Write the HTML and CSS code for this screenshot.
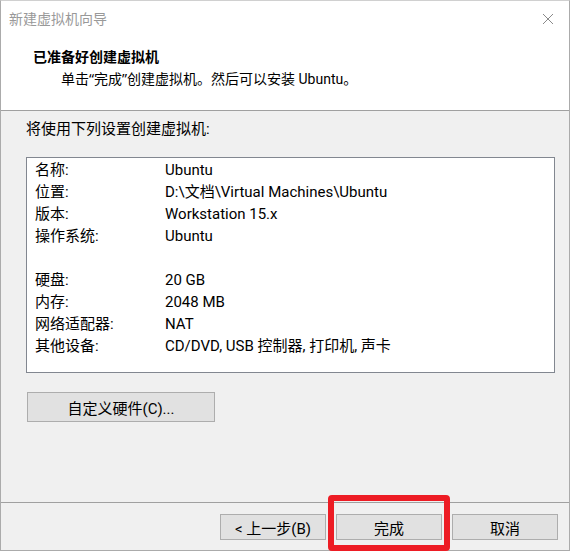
FILE: index.html
```html
<!DOCTYPE html>
<html lang="zh-CN">
<head>
    <meta charset="UTF-8">
    <title>新建虚拟机向导</title>
    <link rel="stylesheet" href="styles.css">
</head>
<body>
    <div class="window">
        <div class="header">
            <div class="titlebar">
                <span class="title">新建虚拟机向导</span>
                <svg class="close" width="12" height="12" viewBox="0 0 12 12">
                    <path d="M1 1 L11 11 M11 1 L1 11" stroke="#8a8a8a" stroke-width="1" fill="none"/>
                </svg>
            </div>
            <div class="heading">已准备好创建虚拟机</div>
            <div class="subheading">单击<span class="quote">“</span>完成<span class="quote">”</span>创建虚拟机。然后可以安装 Ubuntu。</div>
        </div>

        <div class="content">
            <div class="intro">将使用下列设置创建虚拟机:</div>
            <div class="summary">
                <div class="row"><span class="label">名称:</span><span>Ubuntu</span></div>
                <div class="row"><span class="label">位置:</span><span>D:\文档\Virtual Machines\Ubuntu</span></div>
                <div class="row"><span class="label">版本:</span><span>Workstation 15.x</span></div>
                <div class="row"><span class="label">操作系统:</span><span>Ubuntu</span></div>
                <div class="row"></div>
                <div class="row"><span class="label">硬盘:</span><span>20 GB</span></div>
                <div class="row"><span class="label">内存:</span><span>2048 MB</span></div>
                <div class="row"><span class="label">网络适配器:</span><span>NAT</span></div>
                <div class="row"><span class="label">其他设备:</span><span>CD/DVD, USB 控制器, 打印机, 声卡</span></div>
            </div>
            <button class="btn btn-custom">自定义硬件(C)...</button>
        </div>

        <div class="footer">
            <button class="btn">&lt; 上一步(B)</button>
            <button class="btn">完成</button>
            <button class="btn">取消</button>
        </div>

        <div class="highlight"></div>
    </div>
</body>
</html>
```

FILE: styles.css
```css
* {
    box-sizing: border-box;
}
body {
    margin: 0;
    font-family: Roboto, "Noto Sans CJK SC", sans-serif;
    font-size: 15px;
    color: #000;
}
.window {
    position: relative;
    width: 570px;
    height: 551px;
    border: 1px solid #ababab;
    border-top-color: #d0d0d0;
    background-color: #f0f0f0;
    display: flex;
    flex-direction: column;
}
.header {
    background-color: #fff;
    height: 110px;
    border-bottom: 1px solid #a0a0a0;
    flex-shrink: 0;
}
.titlebar {
    height: 36px;
    display: flex;
    align-items: center;
    justify-content: space-between;
    padding: 0 15px 0 8px;
}
.title {
    color: #999;
    font-size: 14px;
    line-height: 20px;
}
.close {
    display: block;
}
.heading {
    margin-top: 9px;
    padding-left: 32px;
    font-size: 14px;
    font-weight: bold;
    line-height: 22px;
}
.subheading {
    padding-left: 60px;
    font-size: 14px;
    line-height: 22px;
}
.quote {
    font-family: "Noto Sans", sans-serif;
}
.content {
    flex: 1;
    padding: 7px 14px 0 25px;
}
.intro {
    line-height: 22px;
}
.summary {
    margin-top: 17px;
    height: 216px;
    background-color: #fff;
    border: 1px solid #828790;
    padding: 1px 8px 0;
}
.row {
    display: flex;
    height: 22px;
    line-height: 22px;
}
.label {
    width: 130px;
}
.btn {
    font-family: inherit;
    font-size: 15px;
    color: #000;
    background-color: #e1e1e1;
    border: 1px solid #adadad;
    padding: 0;
    margin: 0;
}
.btn-custom {
    display: block;
    margin-top: 19px;
    width: 188px;
    height: 30px;
    margin-left: 1px;
}
.footer {
    height: 48px;
    border-top: 1px solid #a0a0a0;
    display: flex;
    justify-content: flex-end;
    gap: 10px;
    padding: 11px 11px 0 0;
    flex-shrink: 0;
}
.footer .btn {
    width: 106px;
    height: 26px;
}
.highlight {
    position: absolute;
    left: 327px;
    top: 494px;
    width: 122px;
    height: 56px;
    border: 6px solid #ed1c24;
    border-radius: 4px;
}
```
